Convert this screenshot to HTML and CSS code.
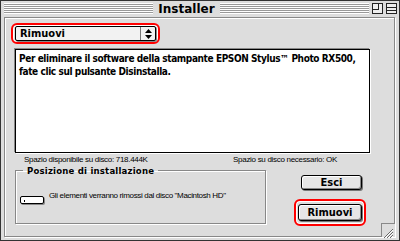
FILE: index.html
```html
<!DOCTYPE html>
<html lang="it">
<head>
    <meta charset="UTF-8">
    <title>Installer</title>
    <link rel="stylesheet" href="styles.css">
</head>
<body>
    <div class="window">
        <div class="titlebar">
            <div class="stripes"></div>
            <div class="title">Installer</div>
            <div class="stripes"></div>
            <div class="widget zoom"><span></span></div>
            <div class="widget collapse"><span></span></div>
        </div>
        <div class="content">
            <div class="popup-row">
                <div class="highlight popup-ring">
                    <div class="popup">
                        <span class="popup-label">Rimuovi</span>
                        <span class="popup-arrows">
                            <svg width="7" height="10" viewBox="0 0 7 10"><path d="M3.5 0 L7 4 H0 Z M0 6 H7 L3.5 10 Z" fill="#000"/></svg>
                        </span>
                    </div>
                </div>
            </div>

            <div class="readme">
                Per eliminare il software della stampante EPSON Stylus™ Photo RX500,<br>
                fate clic sul pulsante Disinstalla.
            </div>

            <div class="disk-row">
                <span>Spazio disponibile su disco: 718.444K</span>
                <span>Spazio su disco necessario: OK</span>
            </div>

            <div class="lower">
                <fieldset class="group">
                    <legend>Posizione di installazione</legend>
                    <div class="target">
                        <div class="disk-menu"><span></span></div>
                        <span class="target-text">Gli elementi verranno rimossi dal disco "Macintosh HD"</span>
                    </div>
                </fieldset>
                <div class="buttons">
                    <div class="button esci">Esci</div>
                    <div class="highlight button-ring">
                        <div class="button">Rimuovi</div>
                    </div>
                </div>
            </div>
            <div class="grow">
                <svg width="12" height="12" viewBox="0 0 12 12">
                    <path d="M2 11 L11 2 M5 11 L11 5 M8 11 L11 8" stroke="#666" stroke-width="1"/>
                    <path d="M3 11 L11 3 M6 11 L11 6 M9 11 L11 9" stroke="#fff" stroke-width="1"/>
                </svg>
            </div>
        </div>
    </div>
</body>
</html>
```

FILE: styles.css
```css
body {
    margin: 0;
    padding: 0;
    background-color: #dddddd;
}

.window {
    width: 400px;
    height: 241px;
    box-sizing: border-box;
    border: 1px solid #333;
    background-color: #dddddd;
    display: flex;
    flex-direction: column;
    font-family: "DejaVu Sans Condensed", "DejaVu Sans", sans-serif;
}

.titlebar {
    height: 15px;
    display: flex;
    align-items: center;
    padding: 0 2px 0 3px;
    gap: 3px;
}

.stripes {
    flex: 1;
    height: 11px;
    background: repeating-linear-gradient(to bottom, #fff 0, #fff 1px, #999 1px, #999 2px);
}

.title {
    font-family: "DejaVu Sans", sans-serif;
    font-weight: bold;
    font-size: 12px;
    padding: 0 2px;
}

.widget {
    width: 11px;
    height: 11px;
    box-sizing: border-box;
    border: 1px solid #222;
    background-color: #eee;
    position: relative;
}

.zoom span {
    position: absolute;
    left: 0;
    top: 0;
    width: 5px;
    height: 5px;
    border-right: 1px solid #222;
    border-bottom: 1px solid #222;
}

.collapse span {
    position: absolute;
    left: 0;
    right: 0;
    top: 3px;
    height: 2px;
    border-top: 1px solid #222;
    border-bottom: 1px solid #222;
}

.content {
    flex: 1;
    margin: 1px 4px 3px 3px;
    border: 1px solid #888;
    box-shadow: inset 1px 1px 0 #fff, 1px 1px 0 #fff;
    position: relative;
    padding: 5px 0 0 6px;
}

.highlight {
    border: 2px solid #ff0000;
    border-radius: 6px;
    padding: 1px;
    box-shadow: inset 0 0 0 1px #fff;
}

.popup-row {
    display: flex;
}

.popup-ring {
    width: 141px;
    height: 15px;
    padding: 1px 2px;
}

.popup {
    height: 15px;
    box-sizing: border-box;
    border: 1px solid #000;
    border-radius: 2px;
    background-color: #f2f2f2;
    box-shadow: 1px 1px 0 #888;
    display: flex;
    align-items: center;
}

.popup-label {
    flex: 1;
    font-weight: bold;
    font-size: 11px;
    padding-left: 4px;
}

.popup-arrows {
    width: 14px;
    height: 13px;
    border-left: 1px solid #777;
    display: flex;
    align-items: center;
    justify-content: center;
}

.readme {
    margin: 5px 0 0 4px;
    width: 355px;
    height: 104px;
    box-sizing: border-box;
    background-color: #fff;
    border: 1px solid #000;
    box-shadow: -1px -1px 0 #888, 1px 1px 0 #fff;
    padding: 2px 3px;
    font-weight: bold;
    font-size: 10px;
    line-height: 13px;
    letter-spacing: -0.4px;
    white-space: nowrap;
}

.disk-row {
    display: flex;
    justify-content: space-between;
    width: 313px;
    padding: 2px 0 0 13px;
    font-family: "Liberation Sans", Arial, sans-serif;
    font-size: 8px;
    letter-spacing: -0.3px;
    height: 10px;
}

.lower {
    display: flex;
}

.group {
    margin: 0 0 0 4px;
    width: 251px;
    height: 59px;
    box-sizing: border-box;
    border: 1px solid #888;
    box-shadow: inset 1px 1px 0 #fff, 1px 1px 0 #fff;
    padding: 0 0 0 4px;
}

.group legend {
    font-weight: bold;
    font-size: 9.5px;
    padding: 0 4px;
    margin-left: 3px;
    letter-spacing: 0.2px;
}

.target {
    display: flex;
    align-items: flex-start;
    margin-top: 15px;
    gap: 5px;
}

.disk-menu {
    width: 24px;
    height: 8px;
    margin-top: 5px;
    box-sizing: border-box;
    border: 1px solid #000;
    border-radius: 2px;
    background-color: #fff;
    box-shadow: 1px 1px 0 #888;
    position: relative;
}

.disk-menu span {
    position: absolute;
    left: 3px;
    top: 3px;
    width: 1px;
    height: 2px;
    background-color: #000;
}

.target-text {
    font-family: "Liberation Sans", Arial, sans-serif;
    font-size: 8px;
    letter-spacing: -0.35px;
}

.buttons {
    margin-left: 28px;
    padding-top: 10px;
    display: flex;
    flex-direction: column;
    align-items: flex-end;
    gap: 9px;
}

.button {
    width: 64px;
    height: 17px;
    box-sizing: border-box;
    border: 1px solid #000;
    border-radius: 3px;
    background-color: #e6e6e6;
    box-shadow: inset 1px 1px 0 #fff, inset -1px -1px 0 #888, 1px 1px 0 #777;
    font-weight: bold;
    font-size: 11px;
    display: flex;
    align-items: center;
    justify-content: center;
}

.esci {
    width: 61px;
    height: 15px;
    margin-right: 4px;
}

.button-ring {
    padding: 3px 2px 3px 2px;
}

.grow {
    position: absolute;
    right: -1px;
    bottom: -1px;
    width: 13px;
    height: 13px;
    background-color: #dddddd;
    border-left: 1px solid #888;
    border-top: 1px solid #888;
}
```
